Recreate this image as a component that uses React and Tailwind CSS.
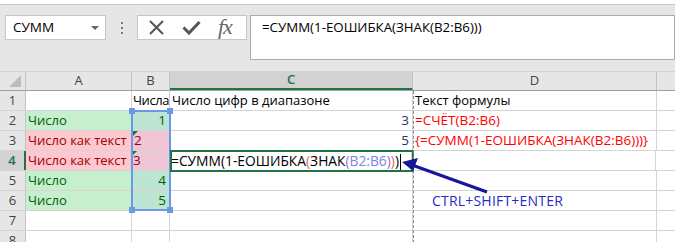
import React from 'react';

const FONT = { fontFamily: '"Open Sans", "Liberation Sans", sans-serif' };

const GREEN_FILL = 'bg-[#c6efce] text-[#006100]';
const RED_FILL = 'bg-[#ffc7ce] text-[#9c0006]';

function HeaderCell({ w, label, active }) {
    return (
        <div
            className={
                'h-full shrink-0 flex items-center justify-center border-r border-[#c3c3c3] text-[13px] ' +
                (active ? 'bg-[#d2d2d2] text-[#217346] font-semibold border-b-2 border-b-[#217346]' : 'text-[#444]')
            }
            style={{ width: w }}
        >
            {label}
        </div>
    );
}

function Cell({ w, className = '', size = 'text-[13px]', right, children }) {
    return (
        <div
            className={
                'relative h-full shrink-0 overflow-hidden whitespace-nowrap border-r border-[#d4d4d4] px-[2px] leading-[19px] ' +
                size + ' ' +
                (right ? 'text-right pr-[3px] ' : '') +
                className
            }
            style={{ width: w }}
        >
            {children}
        </div>
    );
}

function Marker() {
    return <span className="absolute left-0 top-0 w-0 h-0 border-t-[6px] border-t-[#217346] border-r-[6px] border-r-transparent" />;
}

function Row({ n, active, children }) {
    return (
        <div className="flex h-[20px] border-b border-[#d4d4d4]">
            <div
                className={
                    'w-[26px] shrink-0 flex items-center justify-center text-[13px] border-r ' +
                    (active ? 'bg-[#d2d2d2] text-[#217346] font-semibold border-r-2 border-r-[#217346]' : 'bg-[#e6e6e6] text-[#444] border-[#c3c3c3]')
                }
            >
                {n}
            </div>
            {children}
        </div>
    );
}

const W = { a: 106, b: 38, c: 243, d: 244, e: 60 };
const BIG = 'text-[13.5px]';

export default function App() {
    return (
        <div className="relative w-[675px] h-[242px] overflow-hidden bg-[#e6e6e6] text-black" style={FONT}>
            <div className="h-[5px] bg-white border-b border-[#c6c6c6]" />

            {/* formula bar */}
            <div className="flex items-start h-[66px] pt-[10px] pl-[5px]">
                <div className="w-[101px] h-[25px] shrink-0 bg-white border border-[#c6c6c6] flex items-center justify-between pl-[7px] pr-[6px] text-[13.5px]">
                    <span>СУММ</span>
                    <span className="w-0 h-0 border-l-[4px] border-r-[4px] border-t-[4px] border-l-transparent border-r-transparent border-t-[#666]" />
                </div>
                <div className="w-[31px] h-[25px] shrink-0 flex flex-col items-center justify-center gap-[3px]">
                    <span className="w-[2px] h-[2px] bg-[#777]" />
                    <span className="w-[2px] h-[2px] bg-[#777]" />
                    <span className="w-[2px] h-[2px] bg-[#777]" />
                </div>
                <div className="w-[110px] h-[25px] shrink-0 bg-white border border-[#c6c6c6] flex items-center pl-[10px] gap-[17px]">
                    <svg width="17" height="15" viewBox="0 0 17 15">
                        <path d="M2 1 L15 14 M15 1 L2 14" stroke="#555" strokeWidth="2" fill="none" />
                    </svg>
                    <svg width="19" height="15" viewBox="0 0 19 15">
                        <path d="M1.5 7.5 L7 13 L17.5 2" stroke="#555" strokeWidth="3" fill="none" />
                    </svg>
                    <span className="italic text-[22px] leading-none text-[#666] tracking-[-1px] -mt-[2px]" style={{ fontFamily: '"Liberation Serif", serif' }}>
                        fx
                    </span>
                </div>
                <div className="ml-[3px] flex-1 h-[45px] bg-white border border-[#ababab] pl-[11px] pt-[2px] text-[13.3px]">
                    =СУММ(1-ЕОШИБКА(ЗНАК(B2:B6)))
                </div>
            </div>

            {/* column headers */}
            <div className="flex h-[20px] border-t border-[#d5d5d5] border-b border-b-[#9f9f9f] bg-[#e6e6e6]">
                <div className="w-[26px] h-full shrink-0 border-r border-[#c3c3c3] relative">
                    <span className="absolute right-[4px] bottom-[3px] w-0 h-0 border-l-[12px] border-l-transparent border-b-[12px] border-b-[#bdbdbd]" />
                </div>
                <HeaderCell w={W.a} label="A" />
                <HeaderCell w={W.b} label="B" />
                <HeaderCell w={W.c} label="C" active />
                <HeaderCell w={W.d} label="D" />
                <HeaderCell w={W.e} label="" />
            </div>

            <div className="bg-white">
                <Row n="1">
                    <Cell w={W.a} />
                    <Cell w={W.b} className="pl-[1px] tracking-[-0.4px]">Числа</Cell>
                    <Cell w={W.c}>Число цифр в диапазоне</Cell>
                    <Cell w={W.d}>Текст формулы</Cell>
                    <Cell w={W.e} />
                </Row>
                <Row n="2">
                    <Cell w={W.a} className={GREEN_FILL}>Число</Cell>
                    <Cell w={W.b} right size={BIG} className="bg-[#bde5d3] text-[#006100]">1</Cell>
                    <Cell w={W.c} right size={BIG} className="text-[#1f3864]">3</Cell>
                    <Cell w={W.d} size={BIG} className="text-[#ff0000]">=СЧЁТ(B2:B6)</Cell>
                    <Cell w={W.e} />
                </Row>
                <Row n="3">
                    <Cell w={W.a} className={RED_FILL}>Число как текст</Cell>
                    <Cell w={W.b} size={BIG} className="bg-[#f0c5d6] text-[#9c0006]"><Marker />2</Cell>
                    <Cell w={W.c} right size={BIG} className="text-[#1f3864]">5</Cell>
                    <Cell w={W.d} size={BIG} className="text-[#ff0000]">{'{=СУММ(1-ЕОШИБКА(ЗНАК(B2:B6)))}'}</Cell>
                    <Cell w={W.e} />
                </Row>
                <Row n="4" active>
                    <Cell w={W.a - 1} className={RED_FILL}>Число как текст</Cell>
                    <Cell w={W.b} size={BIG} className="bg-[#f0c5d6] text-[#9c0006]"><Marker />3</Cell>
                    <Cell w={W.c} size="text-[13.8px]">
                        =СУММ(1-ЕОШИБКА<span className="text-[#e5685c]">(</span>ЗНАК<span className="text-[#a36bd6]">(</span>
                        <span className="text-[#7c84e0]">B2:B6</span>
                        <span className="text-[#a36bd6]">)</span><span className="text-[#e5685c]">)</span>)
                        <span className="inline-block w-[1px] h-[17px] bg-black align-middle ml-[1px]" />
                    </Cell>
                    <Cell w={W.d} />
                    <Cell w={W.e} />
                </Row>
                <Row n="5">
                    <Cell w={W.a} className={GREEN_FILL}>Число</Cell>
                    <Cell w={W.b} right size={BIG} className="bg-[#bde5d3] text-[#006100]">4</Cell>
                    <Cell w={W.c} />
                    <Cell w={W.d} />
                    <Cell w={W.e} />
                </Row>
                <Row n="6">
                    <Cell w={W.a} className={GREEN_FILL}>Число</Cell>
                    <Cell w={W.b} right size={BIG} className="bg-[#bde5d3] text-[#006100]">5</Cell>
                    <Cell w={W.c} />
                    <Cell w={W.d} />
                    <Cell w={W.e} />
                </Row>
                <Row n="7">
                    <Cell w={W.a} />
                    <Cell w={W.b} />
                    <Cell w={W.c} />
                    <Cell w={W.d} />
                    <Cell w={W.e} />
                </Row>
                <Row n="8">
                    <Cell w={W.a} />
                    <Cell w={W.b} />
                    <Cell w={W.c} />
                    <Cell w={W.d} />
                    <Cell w={W.e} />
                </Row>
            </div>

            {/* referenced range B2:B6 */}
            <div className="absolute left-[131px] top-[110px] w-[40px] h-[101px] border-2 border-[#6b97e5]">
                <span className="absolute -left-[4px] -top-[4px] w-[6px] h-[6px] bg-[#6b97e5]" />
                <span className="absolute -right-[4px] -top-[4px] w-[6px] h-[6px] bg-[#6b97e5]" />
                <span className="absolute -left-[4px] -bottom-[4px] w-[6px] h-[6px] bg-[#6b97e5]" />
                <span className="absolute -right-[4px] -bottom-[4px] w-[6px] h-[6px] bg-[#6b97e5]" />
            </div>

            {/* active cell C4 */}
            <div className="absolute left-[170px] top-[150px] w-[244px] h-[22px] border-2 border-[#217346]" />

            {/* dashed guide */}
            <div className="absolute left-[413px] top-[91px] h-[152px] border-l border-dashed border-[#8a8a8a]" />

            {/* annotation */}
            <svg className="absolute left-0 top-0" width="675" height="242">
                <line x1="487" y1="192" x2="412" y2="165" stroke="#16169a" strokeWidth="3" />
                <polygon points="402,162 418,158 413,171" fill="#16169a" />
            </svg>
            <div className="absolute left-[432px] top-[190px] text-[14px] text-[#2a2ac4] tracking-[0.2px]">CTRL+SHIFT+ENTER</div>
        </div>
    );
}
